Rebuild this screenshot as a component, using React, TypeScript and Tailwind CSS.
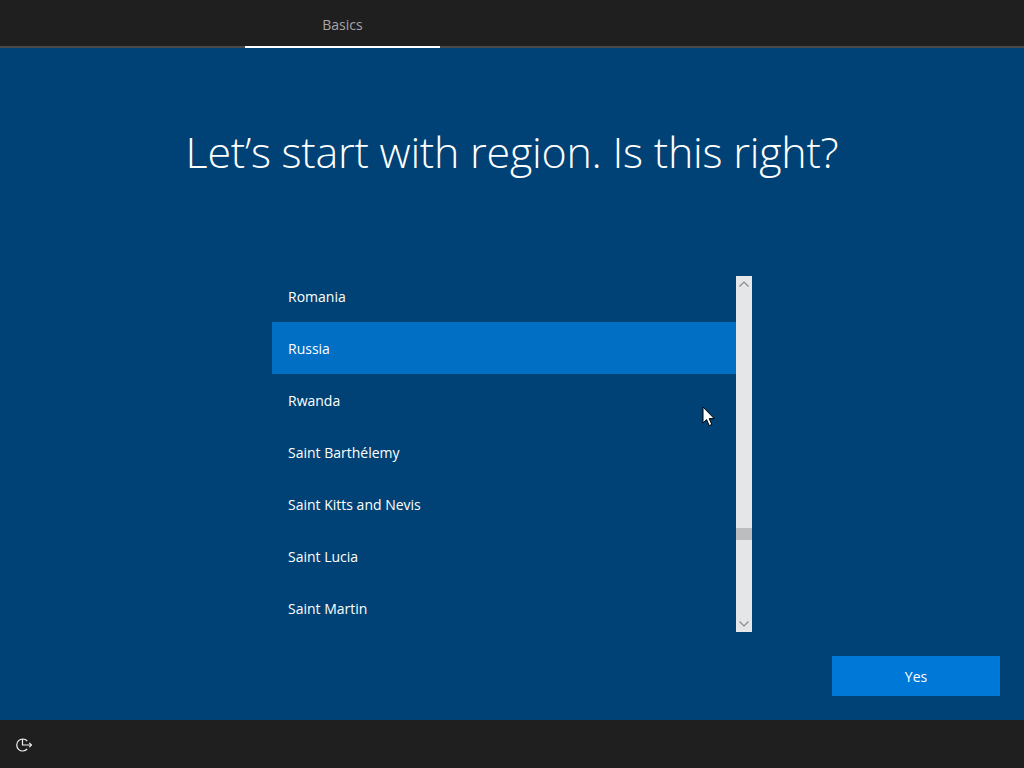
const countries = [
  'Romania',
  'Russia',
  'Rwanda',
  'Saint Barthélemy',
  'Saint Kitts and Nevis',
  'Saint Lucia',
  'Saint Martin',
]

function App() {
  return (
    <div className="relative flex h-[768px] w-[1024px] flex-col overflow-hidden bg-[#004275] font-['Open_Sans','Noto_Sans',sans-serif] text-white">
      <header className="flex h-12 shrink-0 border-b-2 border-[#4a4a4a] bg-[#1f1f1f] pl-[245px]">
        <div className="-mb-0.5 flex h-12 w-[195px] items-center justify-center border-b-2 border-white pt-1 text-sm text-[#a6a6a6]">
          Basics
        </div>
      </header>

      <main className="flex min-h-0 flex-1 flex-col">
        <h1 className="mt-[74px] h-[60px] text-center text-[43px] leading-[60px] font-light tracking-[-0.25px]">
          Let’s start with region. Is this right?
        </h1>

        <div className="mt-[94px] ml-[272px] flex h-[356px] w-[480px]">
          <div className="min-w-0 flex-1 overflow-hidden">
            <ul className="-mt-1.5">
              {countries.map((name) => (
                <li
                  key={name}
                  className={`flex h-[52px] items-center pt-0.5 pl-4 text-sm ${name === 'Russia' ? 'bg-[#006fc4]' : ''}`}
                >
                  {name}
                </li>
              ))}
            </ul>
          </div>
          <Scrollbar />
        </div>

        <div className="mt-6 mr-6 flex justify-end">
          <button className="h-10 w-[168px] bg-[#0078d7] pt-0.5 text-sm text-white">Yes</button>
        </div>
      </main>

      <footer className="flex h-12 shrink-0 items-center bg-[#1f1f1f] pl-4">
        <svg viewBox="0 0 16 16" className="h-4 w-4" fill="none" stroke="#f2f2f2" strokeWidth="1.2">
          <path d="M11.2 5A6 6 0 1 0 11.2 13" />
          <path d="M6.5 3V9H15.5" />
          <path d="M13.3 6.8 15.5 9 13.3 11.2" />
        </svg>
      </footer>

      {/* mouse pointer sits on top of the list */}
      <svg viewBox="0 0 14 22" className="absolute top-[406px] left-[702px] h-[22px] w-[14px]">
        <path d="M1 1V17L4.6 13.6 7.2 19.6 9.8 18.4 7.2 12.6H12.2Z" fill="#fff" stroke="#000" strokeWidth="1" />
      </svg>
    </div>
  )
}

function Scrollbar() {
  return (
    <div className="flex h-full w-4 flex-col bg-[#e4e6e8]">
      <div className="flex h-4 items-center justify-center">
        <svg viewBox="0 0 10 6" className="h-1.5 w-2.5" fill="none" stroke="#8a8a8a" strokeWidth="1.2">
          <path d="M0.5 5.5 5 1 9.5 5.5" />
        </svg>
      </div>
      <div className="flex-1 pt-[236px]">
        <div className="h-3 bg-[#bcbdbe]" />
      </div>
      <div className="flex h-4 items-center justify-center">
        <svg viewBox="0 0 10 6" className="h-1.5 w-2.5" fill="none" stroke="#8a8a8a" strokeWidth="1.2">
          <path d="M0.5 0.5 5 5 9.5 0.5" />
        </svg>
      </div>
    </div>
  )
}

export default App
